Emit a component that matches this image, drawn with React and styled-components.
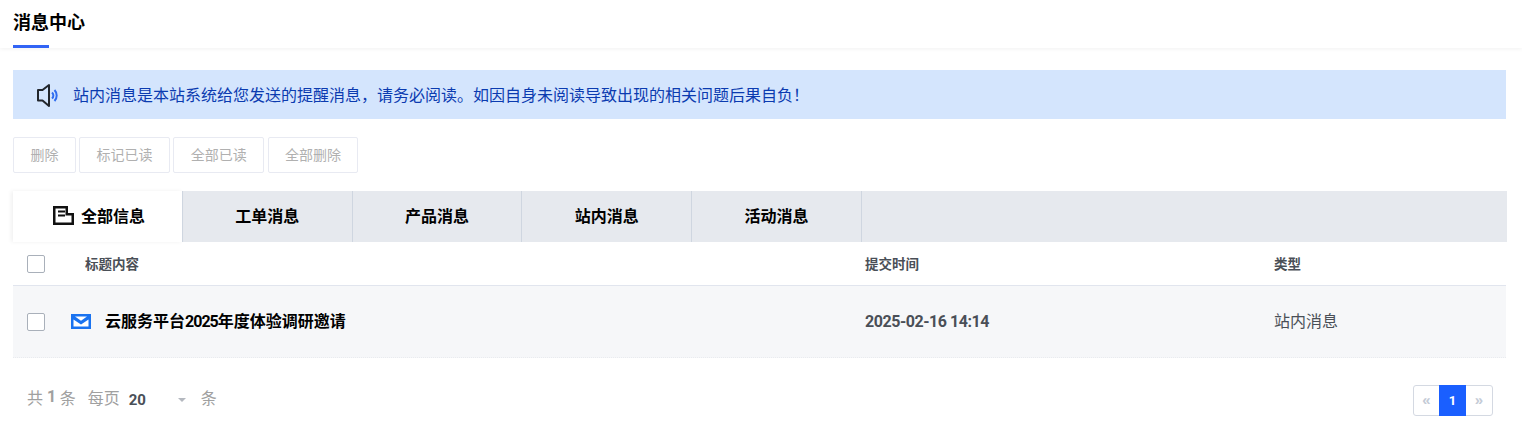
import styled, { createGlobalStyle } from 'styled-components'

const GlobalStyle = createGlobalStyle`
  html, body {
    margin: 0;
    padding: 0;
    background: #fff;
    font-family: "Noto Sans CJK SC", "Liberation Sans", sans-serif;
  }
`
const Page = styled.div`
  width: 1522px;
  height: 437px;
  overflow: hidden;
`
const Header = styled.div`
  height: 48px;
  padding-left: 13px;
  box-sizing: border-box;
  box-shadow: 0 1px 4px rgba(0, 0, 0, 0.06);
`
const Title = styled.div`
  height: 48px;
  width: 36px;
  box-sizing: border-box;
  padding-top: 9px;
  border-bottom: 3px solid #3264f5;
  font-size: 18px;
  line-height: 24px;
  font-weight: 700;
  color: #000;
  white-space: nowrap;
`
const Content = styled.div`
  padding: 22px 16px 0 13px;
`
const Notice = styled.div`
  display: flex;
  align-items: center;
  gap: 15px;
  height: 49px;
  padding-left: 23px;
  background: #d4e5fd;
  color: #0b3bb0;
  font-size: 16px;
  line-height: 22px;
`
const NoticeText = styled.span`
  padding-bottom: 2px;
`
const Toolbar = styled.div`
  display: flex;
  gap: 3.4px;
  margin-top: 18px;
`
const ToolButton = styled.div`
  height: 36px;
  box-sizing: border-box;
  padding: 0 16.4px 2px;
  display: flex;
  align-items: center;
  border: 1px solid #e8eaf2;
  border-radius: 2px;
  color: #b0b0b0;
  font-size: 14px;
`
const Tabs = styled.div`
  display: flex;
  height: 51px;
  margin-top: 18px;
  margin-right: -1px;
  background: #e6e9ee;
`
const Tab = styled.div`
  width: 169.8px;
  box-sizing: border-box;
  padding: 0 0 3px ${(p) => (p.$active ? '3px' : '0')};
  display: flex;
  align-items: center;
  justify-content: center;
  gap: 7px;
  font-size: 16px;
  font-weight: 700;
  color: #000;
  border-right: 1px solid #cfd6e0;
  background: ${(p) => (p.$active ? '#fff' : 'transparent')};
  box-shadow: ${(p) => (p.$active ? '-2px 0 4px rgba(0,0,0,0.06)' : 'none')};
`
const Row = styled.div`
  display: grid;
  grid-template-columns: 44px 794px 409px 1fr;
  align-items: center;
  padding-left: 14px;
`
const HeadRow = styled(Row)`
  height: 43px;
  border-bottom: 1px solid #e1e5ee;
  font-size: 13.5px;
  font-weight: 700;
  color: #4a4f57;
`
const BodyRow = styled(Row)`
  height: 71px;
  background: #f6f7f9;
  border-bottom: 1px dotted #e9ebef;
  font-size: 16px;
  color: #4a4f57;
`
const Check = styled.span`
  display: block;
  width: 18px;
  height: 18px;
  box-sizing: border-box;
  border: 1px solid #a9b0ba;
  border-radius: 2px;
  background: #fff;
`
const TitleCell = styled.div`
  display: flex;
  align-items: center;
  gap: 14px;
  font-size: 16px;
  font-weight: 700;
  color: #000;
`
const Digits = styled.span`
  font-family: Roboto, "Liberation Sans", sans-serif;
  letter-spacing: -1px;
`
const HeadCell = styled.div`
  padding-bottom: 2px;
  padding-left: ${(p) => (p.$indent ? '14px' : '0')};
`
const Lifted = styled.div`
  padding-bottom: 3px;
`
const DateCell = styled.div`
  font-family: Roboto, "Liberation Sans", sans-serif;
  font-size: 16px;
  font-weight: 700;
  letter-spacing: -0.45px;
`
const Footer = styled.div`
  display: flex;
  justify-content: space-between;
  align-items: center;
  height: 31px;
  margin-top: 27px;
  padding: 0 13px 0 14px;
`
const PageInfo = styled.div`
  display: flex;
  align-items: center;
  padding-bottom: 8px;
  font-size: 16px;
  color: #a0a0a0;
`
const Strong = styled.b`
  font-family: Roboto, "Liberation Sans", sans-serif;
  margin: 0 3.5px 0 4px;
  color: #a0a0a0;
`
const PerPage = styled.span`
  margin-left: 12px;
`
const PageSize = styled.div`
  display: flex;
  align-items: center;
  width: 72px;
  margin-left: 9px;
  font-family: Roboto, "Liberation Sans", sans-serif;
  font-size: 15px;
  font-weight: 700;
  color: #4a4f57;
  position: relative;
  top: 3px;
`
const Caret = styled.span`
  margin-left: 32px;
  border-style: solid;
  border-width: 4px 4px 0;
  border-color: #b4b8bf transparent transparent;
`
const Pager = styled.div`
  display: flex;
  height: 31px;
  box-sizing: border-box;
  border: 1px solid #d4d9e2;
  border-radius: 3px;
`
const PagerArrow = styled.div`
  width: ${(p) => p.$width}px;
  display: flex;
  align-items: center;
  justify-content: center;
  padding-bottom: 2px;
  font-family: "Liberation Sans", sans-serif;
  font-size: 15px;
  font-weight: 700;
  color: #c4cbd6;
`
const PagerCurrent = styled.div`
  width: 27px;
  margin: -1px 0;
  display: flex;
  align-items: center;
  justify-content: center;
  font-family: Roboto, "Liberation Sans", sans-serif;
  font-size: 13px;
  font-weight: 700;
  color: #fff;
  background: #1a5fff;
`

const SpeakerIcon = () => (
  <svg width="22" height="26" viewBox="0 0 22 26" fill="none">
    <path d="M2 8h4.500L13 3v21l-6.500-5.500H2z" stroke="#22262c" strokeWidth="2" strokeLinejoin="round" />
    <path d="M16 10.500a4 4 0 0 1 0 6" stroke="#2f6df0" strokeWidth="2" />
    <path d="M18.500 8a8 8 0 0 1 0 11" stroke="#2f6df0" strokeWidth="2" />
  </svg>
)

const ListIcon = () => (
  <svg width="21" height="19" viewBox="0 0 21 19" fill="none">
    <path d="M1.250 1.250h12.500v7h6v9.500h-18.500z" stroke="#111" strokeWidth="2.500" />
    <path d="M5 5.500h7M5 9.500h7" stroke="#111" strokeWidth="2" />
  </svg>
)

const MailIcon = () => (
  <svg width="20" height="15" viewBox="0 0 20 15">
    <rect width="20" height="15" fill="#1a73f0" />
    <path d="M2.500 5.500l7.500 5 7.500-5v7h-15z" fill="#fff" />
    <path d="M4 2.500h12L10 6.800z" fill="#fff" />
  </svg>
)

const tabNames = ['工单消息', '产品消息', '站内消息', '活动消息']
const actions = ['删除', '标记已读', '全部已读', '全部删除']

function App() {
  return (
    <Page>
      <GlobalStyle />
      <Header>
        <Title>消息中心</Title>
      </Header>
      <Content>
        <Notice>
          <SpeakerIcon />
          <NoticeText>站内消息是本站系统给您发送的提醒消息，请务必阅读。如因自身未阅读导致出现的相关问题后果自负！</NoticeText>
        </Notice>
        <Toolbar>
          {actions.map((a) => (
            <ToolButton key={a}>{a}</ToolButton>
          ))}
        </Toolbar>
        <Tabs>
          <Tab $active>
            <ListIcon />
            全部信息
          </Tab>
          {tabNames.map((t) => (
            <Tab key={t}>{t}</Tab>
          ))}
        </Tabs>
        <HeadRow>
          <Check />
          <HeadCell $indent>标题内容</HeadCell>
          <HeadCell>提交时间</HeadCell>
          <HeadCell>类型</HeadCell>
        </HeadRow>
        <BodyRow>
          <Check />
          <TitleCell>
            <MailIcon />
            <Lifted>
              云服务平台<Digits>2025</Digits>年度体验调研邀请
            </Lifted>
          </TitleCell>
          <DateCell>2025-02-16 14:14</DateCell>
          <Lifted>站内消息</Lifted>
        </BodyRow>
        <Footer>
          <PageInfo>
            共<Strong>1</Strong>条
            <PerPage>每页</PerPage>
            <PageSize>
              20
              <Caret />
            </PageSize>
            条
          </PageInfo>
          <Pager>
            <PagerArrow $width={25}>«</PagerArrow>
            <PagerCurrent>1</PagerCurrent>
            <PagerArrow $width={26}>»</PagerArrow>
          </Pager>
        </Footer>
      </Content>
    </Page>
  )
}

export default App
